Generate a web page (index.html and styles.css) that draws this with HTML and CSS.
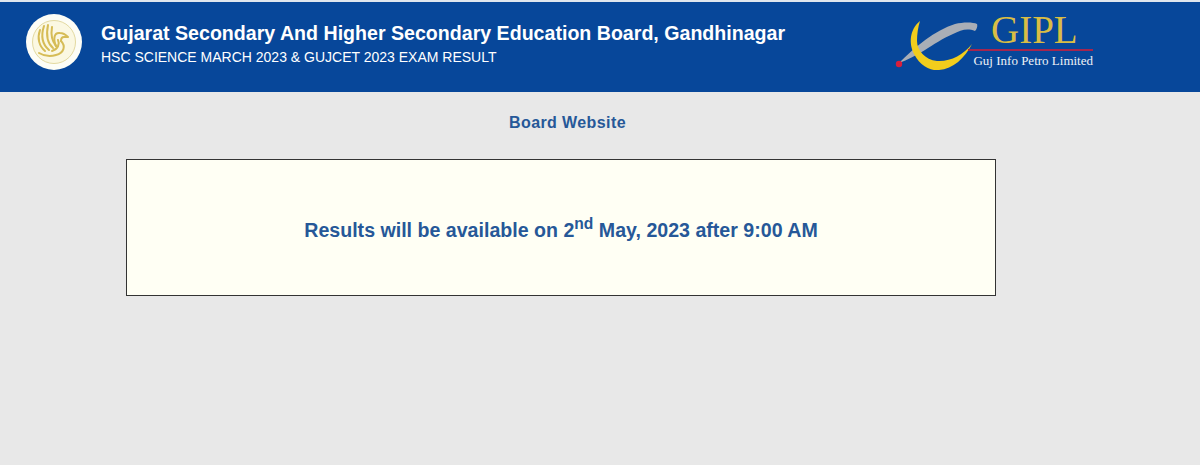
FILE: index.html
```html
<!DOCTYPE html>
<html lang="en">
<head>
<meta charset="utf-8">
<title>HSC Science Result</title>
<link rel="stylesheet" href="styles.css">
</head>
<body>
<header class="header">
  <svg class="emblem" width="58" height="58" viewBox="0 0 58 58" aria-hidden="true">
    <circle cx="29" cy="29" r="28" fill="#fdfdf6"/>
    <circle cx="29" cy="29" r="21.5" fill="#fbf8e2" stroke="#e3d9a0" stroke-width="1"/>
    <g fill="none" stroke="#d6bc56" stroke-width="2" stroke-linecap="round" stroke-linejoin="round">
      <path d="M15 17C12 25 14 33 20 38"/>
      <path d="M19 13C16 22 17 31 24 37"/>
      <path d="M23 12C21 22 22 30 28 35"/>
      <path d="M27 14C26 20 26 27 31 33"/>
      <path d="M31 33C28 26 29 19 35 20C38 20 41 22 43 24L39 24C37 24 36 25 36 28"/>
      <path d="M36 28C41 33 39 40 31 42C25 44 19 43 14 40"/>
      <path d="M33 27C35 31 33 36 27 38"/>
    </g>
  </svg>
  <div class="titles">
    <h1 class="title">Gujarat Secondary And Higher Secondary Education Board, Gandhinagar</h1>
    <p class="subtitle">HSC SCIENCE MARCH 2023 &amp; GUJCET 2023 EXAM RESULT</p>
  </div>
  <div class="gipl">
    <svg class="gipl-mark" width="85" height="60" viewBox="0 0 85 60" aria-hidden="true">
      <path d="M4 49C20 33 40 16 60 10C68 8 78 8 82 10C83 13 81 16 80 17C72 14 66 16 58 20C48 24 38 31 30 36C22 41 12 46 4 49Z" fill="#a9aeb6"/>
      <path d="M25 7C14 16 14 30 19 40C25 52 36 57 44 56C58 55 70 44 77 30C68 41 55 48 42 47C30 46 22 36 22 27C22 20 23 13 25 7Z" fill="#f2cd1c"/>
      <circle cx="4" cy="50" r="3.2" fill="#d81f3c"/>
    </svg>
    <div class="gipl-text">
      <span class="gipl-name">GIPL</span>
      <span class="gipl-full">Guj Info Petro Limited</span>
    </div>
  </div>
</header>
<main class="content">
  <a class="board-link" href="#">Board Website</a>
  <section class="notice">
    <p class="notice-text">Results will be available on 2<sup class="ordinal">nd</sup> May, 2023 after 9:00 AM</p>
  </section>
</main>
</body>
</html>
```
FILE: styles.css
```css
* { box-sizing: border-box; }
html, body { margin: 0; padding: 0; }
body {
  height: 465px;
  overflow: hidden;
  background: #e8e8e8;
  font-family: "Liberation Sans", Arial, sans-serif;
}
.header {
  height: 92px;
  background: #07479a;
  border-top: 2px solid #dfe6ee;
  display: flex;
  align-items: center;
  padding: 0 0 10px 25px;
}
.emblem { flex: none; }
.titles {
  margin-left: 18px;
  width: 794px;
  padding-top: 4px;
  color: #fff;
}
.title {
  margin: 0;
  font-size: 19.6px;
  line-height: 22px;
  font-weight: 700;
  white-space: nowrap;
}
.subtitle {
  margin: 4px 0 0;
  font-size: 14px;
  line-height: 18px;
  white-space: nowrap;
}
.gipl {
  display: flex;
  align-items: flex-start;
  height: 60px;
}
.gipl-mark { flex: none; margin-top: 2px; }
.gipl-text {
  display: flex;
  flex-direction: column;
  margin-left: -12px;
  width: 125px;
}
.gipl-name {
  font-family: "Liberation Serif", serif;
  font-size: 39px;
  line-height: 36px;
  color: #d9bd45;
  padding-left: 23px;
  border-bottom: 2px solid #a5264f;
  height: 39px;
}
.gipl-full {
  font-family: "Liberation Serif", serif;
  font-size: 13px;
  line-height: 16px;
  margin-top: 2px;
  color: #eef2f6;
  white-space: nowrap;
  text-align: right;
}
.content {
  display: flex;
  flex-direction: column;
  align-items: flex-start;
}
.board-link {
  margin: 22px 0 0 509px;
  font-size: 16px;
  line-height: 18px;
  font-weight: 700;
  letter-spacing: 0.4px;
  color: #265898;
  text-decoration: none;
}
.notice {
  margin: 27px 0 0 126px;
  width: 870px;
  height: 137px;
  background: #fffff4;
  border: 1px solid #333;
  display: flex;
  align-items: center;
  justify-content: center;
}
.notice-text {
  margin: 4px 0 0;
  font-size: 19.6px;
  line-height: 24px;
  font-weight: 700;
  color: #265898;
}
.ordinal {
  font-size: 15.6px;
  line-height: 0;
}
```
